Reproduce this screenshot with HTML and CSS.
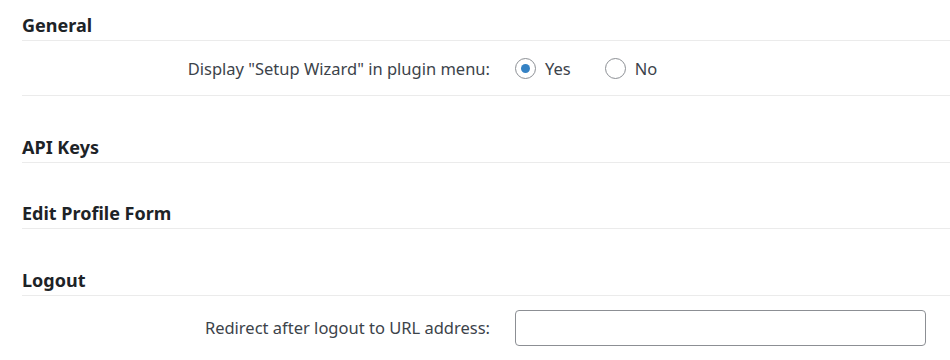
FILE: index.html
```html
<!DOCTYPE html>
<html lang="en">
<head>
  <meta charset="UTF-8">
  <title>Settings</title>
  <link rel="stylesheet" href="styles.css">
</head>
<body>

  <div class="settings">

    <!-- General -->
    <h2 class="section-title">General</h2>
    <div class="form-row">
      <div class="form-label">Display "Setup Wizard" in plugin menu:</div>
      <div class="form-field">
        <label class="radio"><input type="radio" name="wizard" checked> Yes</label>
        <label class="radio"><input type="radio" name="wizard"> No</label>
      </div>
    </div>

    <!-- API Keys -->
    <h2 class="section-title">API Keys</h2>

    <!-- Edit Profile Form -->
    <h2 class="section-title">Edit Profile Form</h2>

    <!-- Logout -->
    <h2 class="section-title">Logout</h2>
    <div class="form-row form-row-input">
      <div class="form-label">Redirect after logout to URL address:</div>
      <div class="form-field">
        <input type="text" class="text-input">
      </div>
    </div>

  </div>

</body>
</html>
```

FILE: styles.css
```css
body {
  margin: 0;
  background: #fff;
  font-family: "Noto Sans", "Open Sans", sans-serif;
  color: #3c434a;
}
.settings {
  padding: 13px 0 0 22px;
}
.section-title {
  margin: 38.5px 0 0;
  padding: 0 0 3px;
  font-size: 18px;
  line-height: 24px;
  font-weight: 700;
  color: #1d2327;
  border-bottom: 1px solid #ebebeb;
}
.section-title:first-child {
  margin-top: 0;
}
.form-row {
  display: grid;
  grid-template-columns: 468px 1fr;
  column-gap: 25px;
  align-items: center;
  height: 54px;
  border-bottom: 1px solid #ebebeb;
  font-size: 16.5px;
}
.form-row-input {
  align-items: start;
  height: auto;
  padding-top: 14px;
  border-bottom: none;
}
.form-row-input .form-label {
  line-height: 35px;
}
.form-label {
  text-align: right;
}
.form-field {
  display: flex;
  align-items: center;
  gap: 34px;
}
.radio {
  display: flex;
  align-items: center;
  gap: 9px;
}
.radio input {
  appearance: none;
  margin: 0;
  width: 21px;
  height: 21px;
  border: 1px solid #8c8f94;
  border-radius: 50%;
  background: #fff;
  display: grid;
  place-items: center;
}
.radio input:checked::before {
  content: "";
  width: 9px;
  height: 9px;
  border-radius: 50%;
  background: #3582c4;
}
.text-input {
  box-sizing: border-box;
  width: 411px;
  height: 36px;
  margin: 0;
  border: 1px solid #8c8f94;
  border-radius: 4px;
  font: inherit;
}
```
